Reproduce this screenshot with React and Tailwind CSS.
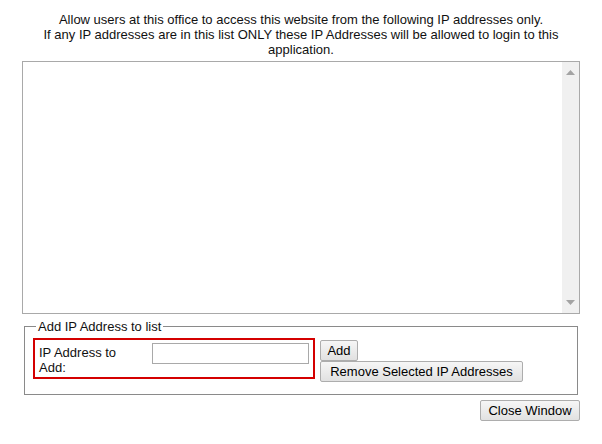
import React from 'react';

const btn =
  'h-[21px] border border-[#adadad] rounded-[2px] bg-gradient-to-b from-[#f6f6f6] to-[#e1e1e1] text-[13px] leading-[15px] text-black text-center';

const App = () => {
  return (
    <div className="w-[602px] h-[444px] bg-white font-['Liberation_Sans',Arial,sans-serif] text-[13px] leading-[15px] text-[#111]">
      <div className="pt-[12px] px-[22px]">
        {/* Intro text */}
        <p className="text-center">
          Allow users at this office to access this website from the following IP addresses only.
          <br />
          If any IP addresses are in this list ONLY these IP Addresses will be allowed to login to this
          <br />
          application.
        </p>

        {/* IP list */}
        <div className="mt-[4px] h-[253px] border border-[#a9a9a9] flex">
          <div className="flex-1" />
          <div className="w-[17px] bg-[#f0f0f0] flex flex-col justify-between items-center py-[8px]">
            <svg width="9" height="5" viewBox="0 0 9 5">
              <path d="M4.5 0 L9 5 L0 5 Z" fill="#a3a3a3" />
            </svg>
            <svg width="9" height="5" viewBox="0 0 9 5">
              <path d="M0 0 L9 0 L4.5 5 Z" fill="#a3a3a3" />
            </svg>
          </div>
        </div>

        {/* Add form */}
        <fieldset className="mx-[2px] mt-[5px] border border-[#8a8a8a] pb-[12px] pl-[8px] pt-[4px]">
          <legend className="ml-[3px] px-[2px]">Add IP Address to list</legend>
          <div className="flex items-start">
            <div className="w-[282px] h-[41px] border-2 border-[#d40000] flex items-start">
              <div className="w-[117px] shrink-0 pl-[4px] pr-[24px] pt-[5px]">IP Address to Add:</div>
              <input
                type="text"
                className="mt-[3px] w-[157px] shrink-0 h-[21px] border border-[#a9a9a9] bg-white outline-none"
              />
            </div>
            <div className="ml-[5px] mt-[2px] flex flex-col items-start">
              <button className={`${btn} w-[38px]`}>Add</button>
              <button className={`${btn} w-[203px]`}>Remove Selected IP Addresses</button>
            </div>
          </div>
        </fieldset>

        <div className="flex justify-end mt-[5px]">
          <button className={`${btn} w-[100px]`}>Close Window</button>
        </div>
      </div>
    </div>
  );
};

export default App;
